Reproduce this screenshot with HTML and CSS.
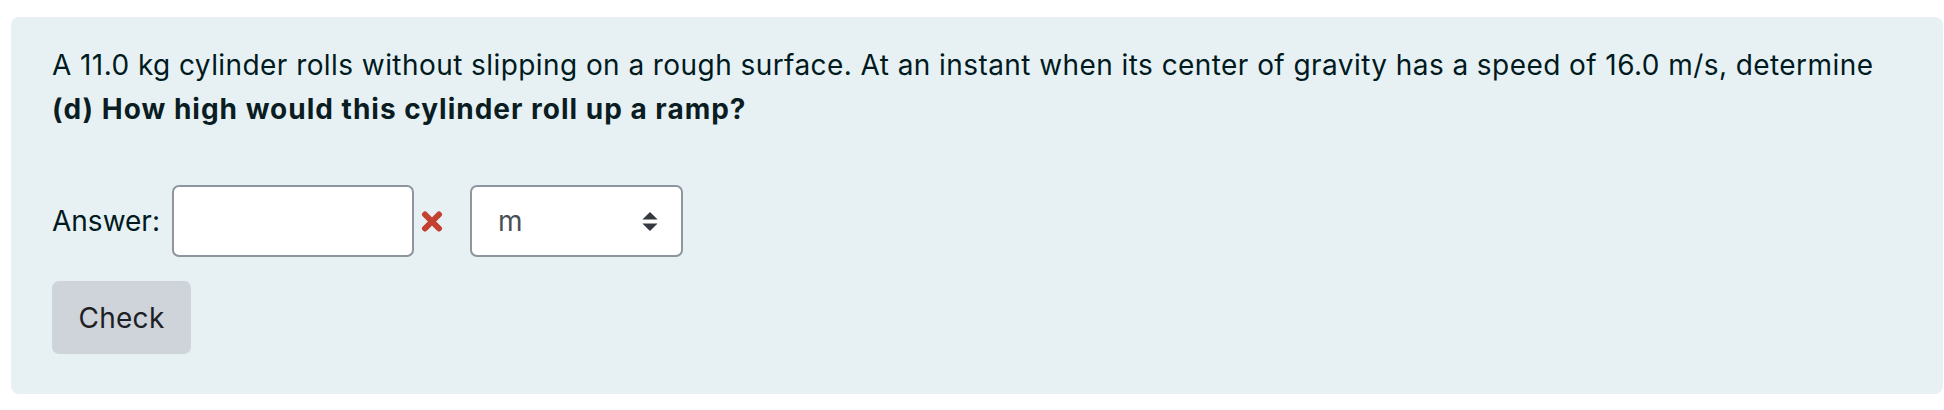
FILE: index.html
```html
<!DOCTYPE html>
<html>
<head>
<meta charset="utf-8">
<link rel="stylesheet" href="styles.css">
</head>
<body>
<div class="formulation">
  <p class="qtext">A 11.0 kg cylinder rolls without slipping on a rough surface. At an instant when its center of gravity has a speed of 16.0 m/s, determine<br><strong>(d) How high would this cylinder roll up a ramp?</strong></p>
  <div class="answer-row">
    <label class="answer-label">Answer:</label>
    <input class="answer-input" type="text">
    <svg class="wrong" viewBox="0 0 22 21" width="22" height="21" aria-hidden="true">
      <path d="M4 3.5 L18 17.5 M18 3.5 L4 17.5" stroke="#c2412f" stroke-width="6" stroke-linecap="round" fill="none"/>
    </svg>
    <div class="unit-select">
      <span class="unit-value">m</span>
      <svg class="arrows" viewBox="0 0 4 5" width="16" height="19" aria-hidden="true">
        <path d="M2 0L0 2h4zm0 5L0 3h4z" fill="#343a40"/>
      </svg>
    </div>
  </div>
  <button class="check-btn" type="button">Check</button>
</div>
</body>
</html>
```
FILE: styles.css
```css
html, body {
  margin: 0;
  padding: 0;
  background: #ffffff;
}
body {
  font-family: Inter, "Noto Sans", "Liberation Sans", sans-serif;
  font-size: 28px;
  line-height: 42px;
  color: #001a1e;
}
.formulation {
  margin: 17px 1px 0 11px;
  background: #e7f1f4;
  border-radius: 8px;
  padding: 26px 40px 39px 41px;
  box-sizing: border-box;
  height: 377px;
}
.qtext {
  margin: 0;
  line-height: 44px;
  letter-spacing: 0.43px;
}
.qtext strong {
  font-weight: 700;
  color: #0a1d22;
  letter-spacing: 1px;
}
.answer-row {
  display: flex;
  align-items: center;
  margin-top: 54px;
  height: 72px;
}
.answer-label {
  margin-right: 12px;
}
.answer-input {
  width: 242px;
  height: 72px;
  box-sizing: border-box;
  border: 2px solid #8f959e;
  border-radius: 7px;
  background: #ffffff;
  margin: 0;
  font: inherit;
}
.wrong {
  margin-left: 7px;
  margin-right: 27px;
  display: block;
}
.unit-select {
  width: 213px;
  height: 72px;
  box-sizing: border-box;
  border: 2px solid #8f959e;
  border-radius: 7px;
  background: #ffffff;
  display: flex;
  align-items: center;
  justify-content: space-between;
  padding: 0 23px 0 26px;
}
.unit-value {
  color: #495057;
}
.arrows {
  display: block;
}
.check-btn {
  display: block;
  margin-top: 24px;
  width: 139px;
  height: 73px;
  border: none;
  border-radius: 7px;
  background: #ced4da;
  color: #1d2125;
  font: inherit;
  letter-spacing: 0.3px;
  padding: 0;
}
```
